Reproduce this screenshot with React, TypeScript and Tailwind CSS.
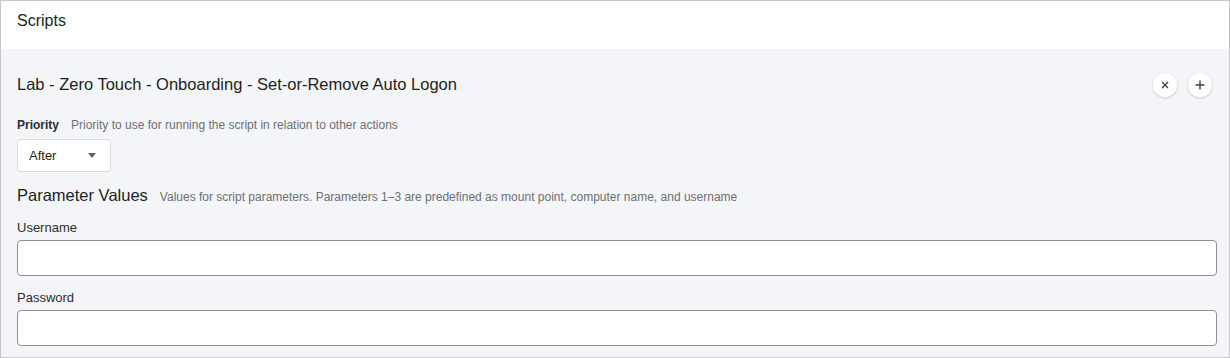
import React from "react";

const CircleButton: React.FC<{ children: React.ReactNode }> = ({ children }) => (
  <button className="flex h-6 w-6 items-center justify-center rounded-full bg-white shadow-[0_1px_3px_rgba(0,0,0,0.18)] text-[#3b3f45]">
    {children}
  </button>
);

const Field: React.FC<{ label: string }> = ({ label }) => (
  <div className="w-full">
    <div className="text-[13px] leading-4 text-[#2a2d31]">{label}</div>
    <div className="mt-[4px] h-[36px] w-full rounded-[4px] border border-[#8e9197] bg-white" />
  </div>
);

export default function App() {
  return (
    <div className="h-[358px] w-[1230px] border border-[#c6c7c9] font-['Liberation_Sans',Arial,sans-serif] text-[#1d1f22]">
      <div className="h-[48px] bg-white px-4 pt-[10px] text-[16px] leading-5">Scripts</div>
      <div className="h-[308px] bg-[#f4f5f9] pl-4 pr-3">
        <div className="flex items-start justify-between pt-[25px]">
          <div className="text-[16.5px] leading-5">Lab - Zero Touch - Onboarding - Set-or-Remove Auto Logon</div>
          <div className="mt-[-1px] flex gap-[11px] pr-[5px]">
            <CircleButton>
              <svg width="8" height="8" viewBox="0 0 8 8" stroke="currentColor" strokeWidth="1.3">
                <path d="M1 1l6 6M7 1L1 7" />
              </svg>
            </CircleButton>
            <CircleButton>
              <svg width="10" height="10" viewBox="0 0 10 10" stroke="currentColor" strokeWidth="1.4">
                <path d="M5 0.5v9M0.5 5h9" />
              </svg>
            </CircleButton>
          </div>
        </div>
        <div className="mt-[20px] flex items-baseline gap-[12px] text-[12px] leading-4">
          <span className="font-bold text-[#2a2d31]">Priority</span>
          <span className="text-[#6d7076]">Priority to use for running the script in relation to other actions</span>
        </div>
        <div className="mt-[6px] flex h-[33px] w-[94px] items-center justify-between rounded-[4px] border border-[#d9dadd] bg-white pl-[11px] pr-[14px] text-[13px]">
          <span>After</span>
          <svg width="8" height="5" viewBox="0 0 8 5">
            <path d="M0 0h8L4 5z" fill="#5b6170" />
          </svg>
        </div>
        <div className="mt-[13px] flex items-baseline gap-[12px]">
          <span className="text-[16.5px] leading-5">Parameter Values</span>
          <span className="text-[12px] text-[#6d7076]">Values for script parameters. Parameters 1–3 are predefined as mount point, computer name, and username</span>
        </div>
        <div className="mt-[14px] flex flex-col gap-[14px]">
          <Field label="Username" />
          <Field label="Password" />
        </div>
      </div>
    </div>
  );
}
